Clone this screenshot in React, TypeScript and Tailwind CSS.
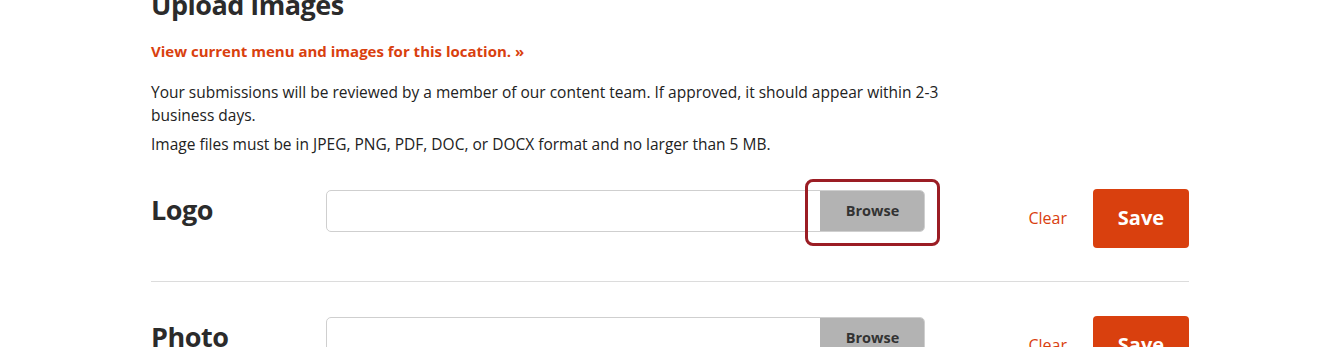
const font = { fontFamily: '"Open Sans", "Liberation Sans", sans-serif' };

function UploadRow({ label, focused }: { label: string; focused?: boolean }) {
  return (
    <div className="flex items-start">
      <div className="flex h-[42px] w-[176px] items-center text-[27px] font-bold tracking-[-0.5px] text-[#2b2b2b]">
        {label}
      </div>
      <div className="relative flex h-[42px] w-[601px] rounded-[5px] border border-[#cfcfcf] bg-white">
        <div className="flex-1" />
        <button className="w-[104px] rounded-r-[4px] bg-[#b3b3b3] text-[14.5px] font-bold text-[#333]">
          Browse
        </button>
        {focused && (
          <div className="pointer-events-none absolute -top-[12px] -right-[16px] h-[67px] w-[135px] rounded-[8px] border-[3px] border-[#9b1d24]" />
        )}
      </div>
      <div className="-mt-[1px] ml-[103px] flex h-[59px] items-center gap-[26px]">
        <button className="text-[16px] text-[#d9400e]">Clear</button>
        <button className="h-[59px] w-[96px] rounded-[4px] bg-[#d9400e] text-[20px] font-bold text-white">
          Save
        </button>
      </div>
    </div>
  );
}

export default function App() {
  return (
    <div className="h-[347px] overflow-hidden bg-white" style={font}>
      <div className="ml-[151px] w-[1038px]">
        <h1 className="-mt-[13px] text-[27px] font-bold leading-[36px] tracking-[-0.5px] text-[#2b2b2b]">
          Upload Images
        </h1>
        <a className="mt-[17px] block text-[15px] font-bold text-[#d9400e]">
          View current menu and images for this location. »
        </a>
        <p className="mt-[18px] w-[800px] text-[15.5px] leading-[23px] text-[#222]">
          Your submissions will be reviewed by a member of our content team. If approved, it should appear within 2-3
          business days.
        </p>
        <p className="mt-[6px] text-[15.5px] leading-[23px] text-[#222]">
          Image files must be in JPEG, PNG, PDF, DOC, or DOCX format and no larger than 5 MB.
        </p>
        <div className="mt-[34px]">
          <UploadRow label="Logo" focused />
        </div>
        <div className="mt-[33px] border-t border-[#dcdcdc]" />
        <div className="mt-[35px]">
          <UploadRow label="Photo" />
        </div>
      </div>
    </div>
  );
}
